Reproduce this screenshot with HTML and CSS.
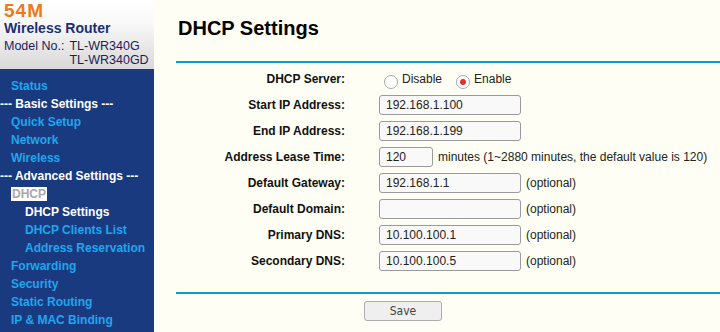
FILE: index.html
```html
<!DOCTYPE html>
<html lang="en">
<head>
    <meta charset="UTF-8">
    <meta name="viewport" content="width=device-width, initial-scale=1.0">
    <title>DHCP Settings</title>
    <link rel="stylesheet" href="styles.css">
</head>
<body>
    <div class="page">
        <div class="sidebar">
            <div class="brand">
                <div class="brand-speed">54M</div>
                <div class="brand-name">Wireless Router</div>
                <div class="brand-model">
                    <span>Model No.:</span>
                    <span>TL-WR340G<br>TL-WR340GD</span>
                </div>
            </div>
            <ul class="menu">
                <li class="menu-link">Status</li>
                <li class="menu-head">--- Basic Settings ---</li>
                <li class="menu-link">Quick Setup</li>
                <li class="menu-link">Network</li>
                <li class="menu-link">Wireless</li>
                <li class="menu-head">--- Advanced Settings ---</li>
                <li class="menu-link"><span class="menu-current">DHCP</span></li>
                <li class="menu-sub menu-active">DHCP Settings</li>
                <li class="menu-sub">DHCP Clients List</li>
                <li class="menu-sub">Address Reservation</li>
                <li class="menu-link">Forwarding</li>
                <li class="menu-link">Security</li>
                <li class="menu-link">Static Routing</li>
                <li class="menu-link">IP &amp; MAC Binding</li>
            </ul>
        </div>

        <div class="main">
            <h1 class="title">DHCP Settings</h1>
            <div class="rule"></div>

            <div class="form">
                <div class="row">
                    <label class="label">DHCP Server:</label>
                    <div class="field">
                        <label class="radio"><input type="radio" name="dhcp"> Disable</label>
                        <label class="radio"><input type="radio" name="dhcp" checked> Enable</label>
                    </div>
                </div>
                <div class="row">
                    <label class="label">Start IP Address:</label>
                    <div class="field"><input class="text" type="text" value="192.168.1.100"></div>
                </div>
                <div class="row">
                    <label class="label">End IP Address:</label>
                    <div class="field"><input class="text" type="text" value="192.168.1.199"></div>
                </div>
                <div class="row">
                    <label class="label">Address Lease Time:</label>
                    <div class="field">
                        <input class="text text-short" type="text" value="120">
                        <span class="hint">minutes (1~2880 minutes, the default value is 120)</span>
                    </div>
                </div>
                <div class="row">
                    <label class="label">Default Gateway:</label>
                    <div class="field"><input class="text" type="text" value="192.168.1.1"><span class="hint">(optional)</span></div>
                </div>
                <div class="row">
                    <label class="label">Default Domain:</label>
                    <div class="field"><input class="text" type="text" value=""><span class="hint">(optional)</span></div>
                </div>
                <div class="row">
                    <label class="label">Primary DNS:</label>
                    <div class="field"><input class="text" type="text" value="10.100.100.1"><span class="hint">(optional)</span></div>
                </div>
                <div class="row">
                    <label class="label">Secondary DNS:</label>
                    <div class="field"><input class="text" type="text" value="10.100.100.5"><span class="hint">(optional)</span></div>
                </div>
            </div>

            <div class="rule rule-bottom"></div>
            <div class="actions">
                <button class="save-button">Save</button>
            </div>
        </div>
    </div>
</body>
</html>
```

FILE: styles.css
```css
body {
    margin: 0;
    font-family: "Liberation Sans", Arial, sans-serif;
    background-color: #fefef4;
}

.page {
    display: flex;
    min-height: 100vh;
}

/* left frame */
.sidebar {
    width: 154px;
    flex-shrink: 0;
    background-color: #1a3a80;
}

.brand {
    height: 69px;
    box-sizing: border-box;
    padding: 2px 0 0 4px;
    background: linear-gradient(to bottom, #ffffff 0%, #f8f8f8 35%, #d8d8d8 100%);
}

.brand-speed {
    color: #f07818;
    font-size: 19px;
    font-weight: bold;
    letter-spacing: 1px;
    line-height: 17px;
}

.brand-name {
    color: #1c2f73;
    font-size: 14px;
    font-weight: bold;
    line-height: 16px;
    margin-top: 1px;
}

.brand-model {
    display: flex;
    gap: 5px;
    color: #1c1c5c;
    font-size: 12.5px;
    line-height: 14px;
    margin-top: 3px;
}

.menu {
    list-style: none;
    margin: 0;
    padding: 8px 0 0 0;
    font-size: 12px;
    font-weight: bold;
    line-height: 18px;
}

.menu-link {
    color: #1ea6f0;
    padding-left: 11px;
}

.menu-head {
    color: #ffffff;
    padding-left: 0;
}

.menu-sub {
    color: #1ea6f0;
    padding-left: 25px;
}

.menu-active {
    color: #ffffff;
}

.menu-current {
    background-color: #ffffff;
    color: #a8a8a8;
    padding: 0 1px;
}

/* right frame */
.main {
    flex: 1;
    padding-left: 22px;
}

.title {
    font-size: 20px;
    line-height: 24px;
    margin: 16px 0 21px 2px;
    color: #000;
}

.rule {
    height: 2px;
    background-color: #0a9ccc;
}

.form {
    padding-top: 3px;
}

.row {
    display: flex;
    align-items: center;
    height: 26px;
}

.label {
    width: 169px;
    text-align: right;
    font-size: 12px;
    font-weight: bold;
    color: #111;
}

.field {
    display: flex;
    align-items: center;
    gap: 5px;
    margin-left: 34px;
    font-size: 12px;
    color: #222;
}

.radio {
    display: flex;
    align-items: center;
    gap: 4px;
    margin-right: 4px;
}

.radio input {
    appearance: none;
    width: 14px;
    height: 14px;
    margin: 5px 0 0 5px;
    border: 1px solid #a8a8a8;
    border-radius: 50%;
    background-color: #ffffff;
}

.radio input:checked {
    background: radial-gradient(circle, #e0302a 0, #e0302a 2.5px, #ffffff 3.5px);
}

.text {
    width: 142px;
    height: 20px;
    box-sizing: border-box;
    padding: 0 6px;
    border: 1px solid #9a9a9a;
    border-radius: 3px;
    background-color: #f9f9f9;
    font-family: "Liberation Sans", Arial, sans-serif;
    font-size: 12px;
    color: #222;
}

.text-short {
    width: 54px;
}

.hint {
    color: #222;
}

.rule-bottom {
    margin-top: 18px;
}

.actions {
    padding: 7px 0 0 188px;
}

.save-button {
    width: 78px;
    height: 20px;
    border: 1px solid #adadad;
    border-radius: 3px;
    background-color: #efefef;
    font-family: "DejaVu Sans Condensed", "DejaVu Sans", sans-serif;
    font-stretch: condensed;
    font-size: 12px;
    color: #444;
    padding: 0;
}
```
